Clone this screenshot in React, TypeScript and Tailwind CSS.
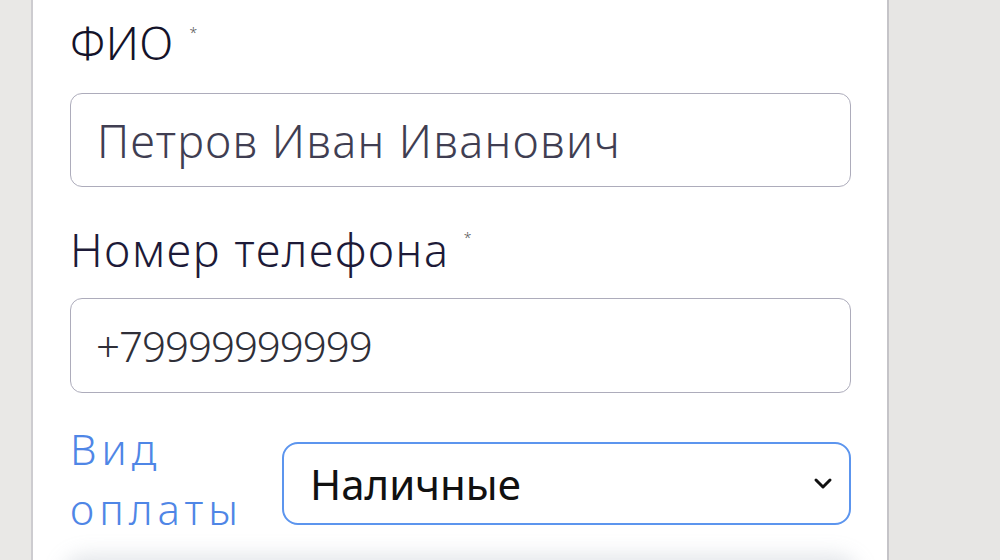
import React from 'react';

export default function App() {
  return (
    <div className="flex h-[560px] w-[1000px] overflow-hidden bg-[#e7e6e4] font-['Noto_Sans',sans-serif]">
      {/* left gutter */}
      <div className="w-[33px] shrink-0 border-r-2 border-[#cdccd0] bg-[#e9e8e6]" />

      {/* form panel */}
      <div className="flex w-[856px] shrink-0 flex-col border-r-2 border-[#c5c4c8] bg-white pl-[37px] pr-[36px] pt-[20px]">
        <label className="mb-[28px] flex shrink-0 items-start text-[45px] font-light leading-[45px] tracking-[0.5px] text-[#14132a]">
          ФИО
          <span className="ml-[16px] mt-[6px] text-[14px] leading-none text-[#555]">*</span>
        </label>
        <input
          readOnly
          value="Петров Иван Иванович"
          className="h-[94px] w-full shrink-0 rounded-[12px] border border-[#adacbb] bg-white px-[26px] text-[45px] font-light tracking-[1.4px] text-[#403e52] outline-none"
        />

        <label className="mb-[26px] mt-[40px] flex shrink-0 items-start text-[45px] font-light leading-[45px] tracking-[1.7px] text-[#1d1a38]">
          Номер телефона
          <span className="ml-[14px] mt-[4px] text-[14px] leading-none text-[#555]">*</span>
        </label>
        <input
          readOnly
          value="+79999999999"
          className="h-[95px] w-full shrink-0 rounded-[12px] border border-[#adacbb] bg-white px-[25px] text-[42px] font-light tracking-[-1px] text-[#2f2f38] outline-none"
        />

        <div className="mt-[26px] flex shrink-0 items-start">
          <label className="w-[212px] shrink-0 text-[42px] font-light leading-[60px] tracking-[5px] text-[#4f86e6]">
            Вид
            <br />
            оплаты
          </label>
          <div className="relative mt-[23px] flex-1">
            <select
              defaultValue="cash"
              className="h-[83px] w-full appearance-none rounded-[16px] border-2 border-[#5c95ee] bg-white pl-[26px] text-[42px] font-normal text-[#111] outline-none"
            >
              <option value="cash">Наличные</option>
              <option value="card">Картой</option>
            </select>
            <svg
              className="pointer-events-none absolute right-[18px] top-[35px] h-[14px] w-[20px]"
              viewBox="0 0 20 14"
              fill="none"
              stroke="#111"
              strokeWidth="3"
              strokeLinecap="round"
              strokeLinejoin="round"
            >
              <path d="M3 3l7 7 7-7" />
            </svg>
          </div>
        </div>

        {/* next block, only its shadow shows */}
        <div className="mt-[24px] h-[60px] shrink-0 rounded-[16px] bg-[#f4f5f7] shadow-[0_0_20px_8px_rgba(150,160,175,0.28)]" />
      </div>
    </div>
  );
}
